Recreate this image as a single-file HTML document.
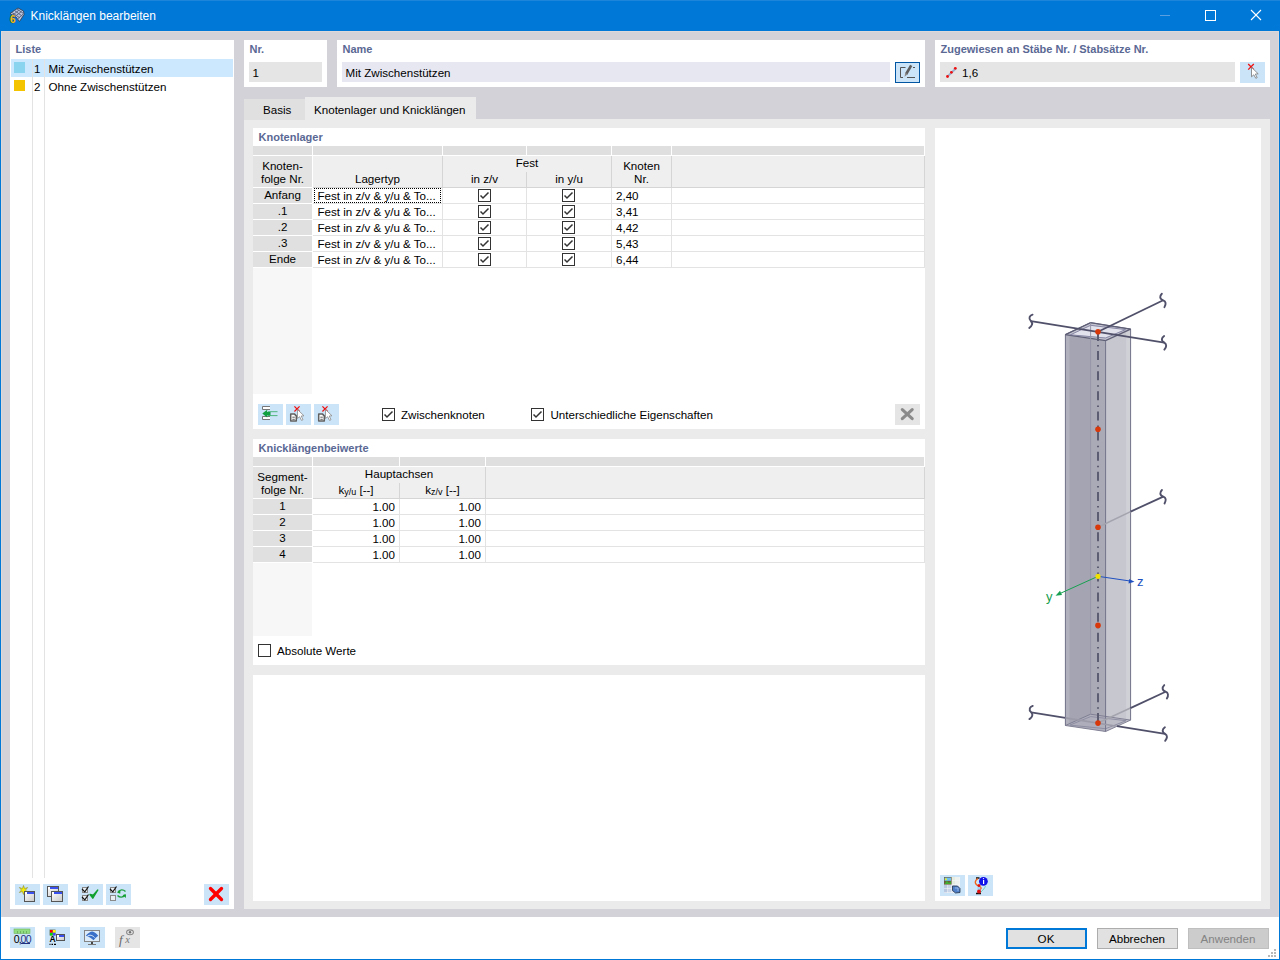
<!DOCTYPE html>
<html><head><meta charset="utf-8"><style>
html,body{margin:0;padding:0;width:1280px;height:960px;overflow:hidden;background:#fff}
svg{display:block;font-family:"Liberation Sans",sans-serif}
</style></head><body>
<svg width="1280" height="960" viewBox="0 0 1280 960">
<rect x="0" y="0" width="1280" height="960" fill="#0078d7" />
<rect x="1" y="31" width="1278" height="886" fill="#d3d2d8" />
<rect x="1" y="917" width="1278" height="42" fill="#ffffff" />
<rect x="0" y="0" width="1280" height="1" fill="#1e86da" />
<rect x="1" y="31" width="1278" height="1" fill="#ddd8da" />
<rect x="1" y="31" width="1" height="886" fill="#ddd8da" />
<rect x="1278" y="31" width="1" height="886" fill="#ddd8da" />
<text x="30.5" y="20" font-size="12" fill="#fff" text-anchor="start" >Knicklängen bearbeiten</text>
<rect x="1160" y="15" width="10" height="1" fill="#5a9fe0" />
<rect x="1205.5" y="10.5" width="10" height="10" fill="none" stroke="#fff" stroke-width="1"/>
<line x1="1251" y1="10" x2="1261" y2="20" stroke="#fff" stroke-width="1.1" />
<line x1="1261" y1="10" x2="1251" y2="20" stroke="#fff" stroke-width="1.1" />
<rect x="10" y="40" width="224" height="869" fill="#fff" />
<text x="15.5" y="53" font-size="11" font-weight="bold" fill="#5a6894" text-anchor="start" >Liste</text>
<rect x="11" y="59" width="222" height="18" fill="#cce8ff" />
<rect x="32" y="59" width="1" height="819" fill="#e3e3e3" />
<rect x="44" y="59" width="1" height="819" fill="#e3e3e3" />
<rect x="14" y="62" width="11" height="11" fill="#8ad4f0" />
<rect x="14" y="80" width="11" height="11" fill="#f5c400" />
<text x="40.5" y="73" font-size="11.6" fill="#000" text-anchor="end" >1</text>
<text x="48.5" y="73" font-size="11.6" fill="#000" text-anchor="start" >Mit Zwischenstützen</text>
<text x="40.5" y="91" font-size="11.6" fill="#000" text-anchor="end" >2</text>
<text x="48.5" y="91" font-size="11.6" fill="#000" text-anchor="start" >Ohne Zwischenstützen</text>
<rect x="244" y="40" width="83" height="47" fill="#fff" />
<text x="249.5" y="53" font-size="11" font-weight="bold" fill="#5a6894" text-anchor="start" >Nr.</text>
<rect x="249" y="62" width="73" height="20" fill="#e5e5e5" />
<text x="252.5" y="77" font-size="11.6" fill="#000" text-anchor="start" >1</text>
<rect x="337" y="40" width="588" height="47" fill="#fff" />
<text x="342.5" y="53" font-size="11" font-weight="bold" fill="#5a6894" text-anchor="start" >Name</text>
<rect x="342" y="62" width="548" height="20" fill="#e7e7f1" />
<text x="345.5" y="77" font-size="11.6" fill="#000" text-anchor="start" >Mit Zwischenstützen</text>
<rect x="895" y="62" width="25" height="21" fill="#0055a3" />
<rect x="896" y="63" width="23" height="19" fill="#cce4f7" />
<rect x="935" y="40" width="335" height="47" fill="#fff" />
<text x="940.5" y="53" font-size="11" font-weight="bold" fill="#5a6894" text-anchor="start" >Zugewiesen an Stäbe Nr. / Stabsätze Nr.</text>
<rect x="940" y="62" width="295" height="20" fill="#e5e5e5" />
<text x="962" y="77" font-size="11.6" fill="#000" text-anchor="start" >1,6</text>
<rect x="1240" y="62" width="25" height="21" fill="#cce4f7" />
<rect x="244" y="119" width="1026" height="790" fill="#ebebeb" />
<rect x="244" y="99" width="61" height="21" fill="#e0e0e0" />
<text x="263" y="114" font-size="11.6" fill="#000" text-anchor="start" >Basis</text>
<rect x="305" y="97" width="171" height="23" fill="#ebebeb" />
<text x="314" y="114" font-size="11.6" fill="#000" text-anchor="start" >Knotenlager und Knicklängen</text>
<rect x="253" y="128" width="672" height="301" fill="#fff" />
<rect x="253" y="439" width="672" height="226" fill="#fff" />
<rect x="253" y="675" width="672" height="226" fill="#fff" />
<rect x="935" y="128" width="326" height="773" fill="#fff" />
<rect x="1006" y="928" width="81" height="21" fill="#0078d7" />
<rect x="1008" y="930" width="77" height="17" fill="#e1e1e1" />
<text x="1046" y="943" font-size="11.6" fill="#000" text-anchor="middle" >OK</text>
<rect x="1097" y="928" width="81" height="21" fill="#adadad" />
<rect x="1098" y="929" width="79" height="19" fill="#e1e1e1" />
<text x="1137" y="943" font-size="11.6" fill="#000" text-anchor="middle" >Abbrechen</text>
<rect x="1188" y="928" width="81" height="21" fill="#bfbfbf" />
<rect x="1189" y="929" width="79" height="19" fill="#cccccc" />
<text x="1228" y="943" font-size="11.6" fill="#838383" text-anchor="middle" >Anwenden</text>
<text x="258.5" y="141" font-size="11" font-weight="bold" fill="#5a6894" text-anchor="start" >Knotenlager</text>
<rect x="253" y="146" width="671" height="9" fill="#dfdfdf" />
<rect x="312" y="146" width="1" height="9" fill="#fff" />
<rect x="442" y="146" width="1" height="9" fill="#fff" />
<rect x="526" y="146" width="1" height="9" fill="#fff" />
<rect x="611" y="146" width="1" height="9" fill="#fff" />
<rect x="671" y="146" width="1" height="9" fill="#fff" />
<rect x="253" y="156" width="59" height="31" fill="#e3e3e3" />
<rect x="313" y="156" width="611" height="31" fill="#efefef" />
<rect x="442" y="156" width="1" height="31" fill="#d5d5d5" />
<rect x="526" y="172" width="1" height="15" fill="#d5d5d5" />
<rect x="611" y="156" width="1" height="31" fill="#d5d5d5" />
<rect x="671" y="156" width="1" height="31" fill="#d5d5d5" />
<rect x="924" y="156" width="1" height="31" fill="#d5d5d5" />
<rect x="313" y="187" width="612" height="1" fill="#d5d5d5" />
<rect x="253" y="188" width="59" height="15" fill="#e0e0e0" />
<rect x="313" y="203" width="612" height="1" fill="#e3e3e3" />
<rect x="253" y="204" width="59" height="15" fill="#e0e0e0" />
<rect x="313" y="219" width="612" height="1" fill="#e3e3e3" />
<rect x="253" y="220" width="59" height="15" fill="#e0e0e0" />
<rect x="313" y="235" width="612" height="1" fill="#e3e3e3" />
<rect x="253" y="236" width="59" height="15" fill="#e0e0e0" />
<rect x="313" y="251" width="612" height="1" fill="#e3e3e3" />
<rect x="253" y="252" width="59" height="15" fill="#e0e0e0" />
<rect x="313" y="267" width="612" height="1" fill="#e3e3e3" />
<rect x="442" y="188" width="1" height="80" fill="#e3e3e3" />
<rect x="526" y="188" width="1" height="80" fill="#e3e3e3" />
<rect x="611" y="188" width="1" height="80" fill="#e3e3e3" />
<rect x="671" y="188" width="1" height="80" fill="#e3e3e3" />
<rect x="924" y="188" width="1" height="80" fill="#e3e3e3" />
<rect x="253" y="268" width="59" height="126" fill="#f7f7f7" />
<text x="282.5" y="170" font-size="11.6" fill="#000" text-anchor="middle" >Knoten-</text>
<text x="282.5" y="183" font-size="11.6" fill="#000" text-anchor="middle" >folge Nr.</text>
<text x="377.5" y="183" font-size="11.6" fill="#000" text-anchor="middle" >Lagertyp</text>
<text x="527" y="167" font-size="11.6" fill="#000" text-anchor="middle" >Fest</text>
<text x="484.5" y="183" font-size="11.6" fill="#000" text-anchor="middle" >in z/v</text>
<text x="569" y="183" font-size="11.6" fill="#000" text-anchor="middle" >in y/u</text>
<text x="641.5" y="170" font-size="11.6" fill="#000" text-anchor="middle" >Knoten</text>
<text x="641.5" y="183" font-size="11.6" fill="#000" text-anchor="middle" >Nr.</text>
<text x="282.5" y="199" font-size="11.6" fill="#000" text-anchor="middle" >Anfang</text>
<text x="317.4" y="200" font-size="11.6" fill="#000" text-anchor="start" >Fest in z/v &amp; y/u &amp; To...</text>
<rect x="478.5" y="189.5" width="12" height="12" fill="#fff" stroke="#333" stroke-width="1"/>
<polyline points="480.5,195.5 483,198 488.5,192.5" fill="none" stroke="#333" stroke-width="1.45"/>
<rect x="562.5" y="189.5" width="12" height="12" fill="#fff" stroke="#333" stroke-width="1"/>
<polyline points="564.5,195.5 567,198 572.5,192.5" fill="none" stroke="#333" stroke-width="1.45"/>
<text x="616" y="200" font-size="11.6" fill="#000" text-anchor="start" >2,40</text>
<text x="282.5" y="215" font-size="11.6" fill="#000" text-anchor="middle" >.1</text>
<text x="317.4" y="216" font-size="11.6" fill="#000" text-anchor="start" >Fest in z/v &amp; y/u &amp; To...</text>
<rect x="478.5" y="205.5" width="12" height="12" fill="#fff" stroke="#333" stroke-width="1"/>
<polyline points="480.5,211.5 483,214 488.5,208.5" fill="none" stroke="#333" stroke-width="1.45"/>
<rect x="562.5" y="205.5" width="12" height="12" fill="#fff" stroke="#333" stroke-width="1"/>
<polyline points="564.5,211.5 567,214 572.5,208.5" fill="none" stroke="#333" stroke-width="1.45"/>
<text x="616" y="216" font-size="11.6" fill="#000" text-anchor="start" >3,41</text>
<text x="282.5" y="231" font-size="11.6" fill="#000" text-anchor="middle" >.2</text>
<text x="317.4" y="232" font-size="11.6" fill="#000" text-anchor="start" >Fest in z/v &amp; y/u &amp; To...</text>
<rect x="478.5" y="221.5" width="12" height="12" fill="#fff" stroke="#333" stroke-width="1"/>
<polyline points="480.5,227.5 483,230 488.5,224.5" fill="none" stroke="#333" stroke-width="1.45"/>
<rect x="562.5" y="221.5" width="12" height="12" fill="#fff" stroke="#333" stroke-width="1"/>
<polyline points="564.5,227.5 567,230 572.5,224.5" fill="none" stroke="#333" stroke-width="1.45"/>
<text x="616" y="232" font-size="11.6" fill="#000" text-anchor="start" >4,42</text>
<text x="282.5" y="247" font-size="11.6" fill="#000" text-anchor="middle" >.3</text>
<text x="317.4" y="248" font-size="11.6" fill="#000" text-anchor="start" >Fest in z/v &amp; y/u &amp; To...</text>
<rect x="478.5" y="237.5" width="12" height="12" fill="#fff" stroke="#333" stroke-width="1"/>
<polyline points="480.5,243.5 483,246 488.5,240.5" fill="none" stroke="#333" stroke-width="1.45"/>
<rect x="562.5" y="237.5" width="12" height="12" fill="#fff" stroke="#333" stroke-width="1"/>
<polyline points="564.5,243.5 567,246 572.5,240.5" fill="none" stroke="#333" stroke-width="1.45"/>
<text x="616" y="248" font-size="11.6" fill="#000" text-anchor="start" >5,43</text>
<text x="282.5" y="263" font-size="11.6" fill="#000" text-anchor="middle" >Ende</text>
<text x="317.4" y="264" font-size="11.6" fill="#000" text-anchor="start" >Fest in z/v &amp; y/u &amp; To...</text>
<rect x="478.5" y="253.5" width="12" height="12" fill="#fff" stroke="#333" stroke-width="1"/>
<polyline points="480.5,259.5 483,262 488.5,256.5" fill="none" stroke="#333" stroke-width="1.45"/>
<rect x="562.5" y="253.5" width="12" height="12" fill="#fff" stroke="#333" stroke-width="1"/>
<polyline points="564.5,259.5 567,262 572.5,256.5" fill="none" stroke="#333" stroke-width="1.45"/>
<text x="616" y="264" font-size="11.6" fill="#000" text-anchor="start" >6,44</text>
<defs><pattern id="dots" width="2" height="2" patternUnits="userSpaceOnUse"><rect x="0" y="0" width="1" height="1" fill="#000"/><rect x="1" y="1" width="1" height="1" fill="#000"/></pattern></defs>
<defs><pattern id="dots2" width="2" height="2" patternUnits="userSpaceOnUse"><rect x="0" y="0" width="1" height="1" fill="#000"/></pattern></defs>
<rect x="314" y="188" width="128" height="1" fill="url(#dots2)" />
<rect x="314" y="202" width="128" height="1" fill="url(#dots2)" />
<rect x="314" y="188" width="1" height="15" fill="url(#dots2)" />
<rect x="440" y="188" width="1" height="15" fill="url(#dots2)" />
<rect x="258" y="404" width="25" height="21" fill="#cce4f7" />
<rect x="286" y="404" width="25" height="21" fill="#cce4f7" />
<rect x="314" y="404" width="25" height="21" fill="#cce4f7" />
<rect x="382.5" y="408.5" width="12" height="12" fill="#fff" stroke="#333" stroke-width="1"/>
<polyline points="384.5,414.5 387,417 392.5,411.5" fill="none" stroke="#333" stroke-width="1.45"/>
<text x="401" y="419" font-size="11.6" fill="#000" text-anchor="start" >Zwischenknoten</text>
<rect x="531.5" y="408.5" width="12" height="12" fill="#fff" stroke="#333" stroke-width="1"/>
<polyline points="533.5,414.5 536,417 541.5,411.5" fill="none" stroke="#333" stroke-width="1.45"/>
<text x="550.5" y="419" font-size="11.6" fill="#000" text-anchor="start" >Unterschiedliche Eigenschaften</text>
<rect x="895" y="404" width="25" height="21" fill="#e5e5e5" />
<line x1="902.3" y1="409.6" x2="912.2" y2="418.6" stroke="#8a8a8a" stroke-width="3.1" stroke-linecap="round"/>
<line x1="912.2" y1="409.6" x2="902.3" y2="418.6" stroke="#8a8a8a" stroke-width="3.1" stroke-linecap="round"/>
<text x="258.5" y="452" font-size="11" font-weight="bold" fill="#5a6894" text-anchor="start" >Knicklängenbeiwerte</text>
<rect x="253" y="457" width="671" height="9" fill="#dfdfdf" />
<rect x="312" y="457" width="1" height="9" fill="#fff" />
<rect x="399" y="457" width="1" height="9" fill="#fff" />
<rect x="485" y="457" width="1" height="9" fill="#fff" />
<rect x="253" y="467" width="59" height="31" fill="#e3e3e3" />
<rect x="313" y="467" width="611" height="31" fill="#efefef" />
<rect x="399" y="483" width="1" height="15" fill="#d5d5d5" />
<rect x="485" y="467" width="1" height="31" fill="#d5d5d5" />
<rect x="924" y="467" width="1" height="31" fill="#d5d5d5" />
<rect x="313" y="498" width="612" height="1" fill="#d5d5d5" />
<rect x="253" y="499" width="59" height="15" fill="#e0e0e0" />
<rect x="313" y="514" width="612" height="1" fill="#e3e3e3" />
<rect x="253" y="515" width="59" height="15" fill="#e0e0e0" />
<rect x="313" y="530" width="612" height="1" fill="#e3e3e3" />
<rect x="253" y="531" width="59" height="15" fill="#e0e0e0" />
<rect x="313" y="546" width="612" height="1" fill="#e3e3e3" />
<rect x="253" y="547" width="59" height="15" fill="#e0e0e0" />
<rect x="313" y="562" width="612" height="1" fill="#e3e3e3" />
<rect x="399" y="499" width="1" height="64" fill="#e3e3e3" />
<rect x="485" y="499" width="1" height="64" fill="#e3e3e3" />
<rect x="924" y="499" width="1" height="64" fill="#e3e3e3" />
<rect x="253" y="563" width="59" height="73" fill="#f7f7f7" />
<text x="282.5" y="481" font-size="11.6" fill="#000" text-anchor="middle" >Segment-</text>
<text x="282.5" y="494" font-size="11.6" fill="#000" text-anchor="middle" >folge Nr.</text>
<text x="399" y="478" font-size="11.6" fill="#000" text-anchor="middle" >Hauptachsen</text>
<text x="356" y="494" font-size="11.6" fill="#000" text-anchor="middle" >k<tspan font-size="9" dy="1">y/u</tspan><tspan dy="-1"> [--]</tspan></text>
<text x="442.5" y="494" font-size="11.6" fill="#000" text-anchor="middle" >k<tspan font-size="9" dy="1">z/v</tspan><tspan dy="-1"> [--]</tspan></text>
<text x="282.5" y="510" font-size="11.6" fill="#000" text-anchor="middle" >1</text>
<text x="395" y="511" font-size="11.6" fill="#000" text-anchor="end" >1.00</text>
<text x="481" y="511" font-size="11.6" fill="#000" text-anchor="end" >1.00</text>
<text x="282.5" y="526" font-size="11.6" fill="#000" text-anchor="middle" >2</text>
<text x="395" y="527" font-size="11.6" fill="#000" text-anchor="end" >1.00</text>
<text x="481" y="527" font-size="11.6" fill="#000" text-anchor="end" >1.00</text>
<text x="282.5" y="542" font-size="11.6" fill="#000" text-anchor="middle" >3</text>
<text x="395" y="543" font-size="11.6" fill="#000" text-anchor="end" >1.00</text>
<text x="481" y="543" font-size="11.6" fill="#000" text-anchor="end" >1.00</text>
<text x="282.5" y="558" font-size="11.6" fill="#000" text-anchor="middle" >4</text>
<text x="395" y="559" font-size="11.6" fill="#000" text-anchor="end" >1.00</text>
<text x="481" y="559" font-size="11.6" fill="#000" text-anchor="end" >1.00</text>
<rect x="258.5" y="644.5" width="12" height="12" fill="#fff" stroke="#333" stroke-width="1"/>
<text x="277" y="655" font-size="11.6" fill="#000" text-anchor="start" >Absolute Werte</text>
<rect x="15" y="884" width="25" height="21" fill="#cce4f7" />
<rect x="43" y="884" width="25" height="21" fill="#cce4f7" />
<rect x="78" y="884" width="25" height="21" fill="#cce4f7" />
<rect x="106" y="884" width="25" height="21" fill="#cce4f7" />
<rect x="204" y="884" width="25" height="21" fill="#cce4f7" />
<line x1="210.5" y1="888.5" x2="221.5" y2="899.5" stroke="#f00" stroke-width="3.3" stroke-linecap="round"/>
<line x1="221.5" y1="888.5" x2="210.5" y2="899.5" stroke="#f00" stroke-width="3.3" stroke-linecap="round"/>
<rect x="10" y="927" width="25" height="21" fill="#cce4f7" />
<rect x="45" y="927" width="25" height="21" fill="#cce4f7" />
<rect x="80" y="927" width="25" height="21" fill="#cce4f7" />
<rect x="115" y="927" width="25" height="21" fill="#e5e5e5" />
<rect x="940" y="875" width="25" height="21" fill="#cce4f7" />
<rect x="968" y="875" width="25" height="21" fill="#cce4f7" />
<polygon points="1065.4,334.6 1105.6,340.6 1105.6,731.5 1065.4,725.5" fill="#a4a4b2"/>
<polygon points="1065.4,334.6 1069.6000000000001,335.20000000000005 1069.6000000000001,726.1 1065.4,725.5" fill="#b1b1bd"/>
<polygon points="1090.6,322.7 1105.6,340.6 1105.6,731.5 1090.6,717.2" fill="#aaaab7"/>
<polygon points="1105.6,340.6 1130.6,329.1 1130.6,720.1 1105.6,731.5" fill="#c7c7d0"/>
<polygon points="1126.1,330.8 1130.6,329.1 1130.6,720.1 1126.1,721.8000000000001" fill="#d0d0d7"/>
<polygon points="1065.4,334.6 1090.6,322.7 1130.6,329.1 1105.6,340.6" fill="#c4c4d0"/>
<polygon points="1071.4,334.6 1090.6,325.7 1124.6,329.40000000000003 1105.6,337.6" fill="#e2e2ec"/>
<polygon points="1065.4,725.5 1105.6,731.5 1130.6,720.1 1090.6,714.2" fill="#b4b4c2" opacity="0.6"/>
<polygon points="1065.4,725.5 1105.6,731.5 1130.6,720.1 1090.6,714.2" fill="none" stroke="#7a7a90" stroke-width="0.9"/>
<polygon points="1069.9,725.1 1105.6,728.7 1126.1,720.7 1090.6,716.6" fill="none" stroke="#8a8aa0" stroke-width="0.9"/>
<polyline points="1065.4,725.5 1065.4,334.6 1090.6,322.7 1130.6,329.1 1130.6,720.1" fill="none" stroke="#72728a" stroke-width="1"/>
<polyline points="1065.4,334.6 1105.6,340.6 1130.6,329.1" fill="none" stroke="#5e5e76" stroke-width="1.4"/>
<polyline points="1065.4,334.6 1090.6,322.7 1130.6,329.1" fill="none" stroke="#5e5e76" stroke-width="1.3"/>
<polygon points="1070.4,334.8 1090.6,325.3 1125.6,329.6 1105.6,338.0" fill="none" stroke="#8080a0" stroke-width="0.9"/>
<line x1="1105.6" y1="340.6" x2="1105.6" y2="731.5" stroke="#72728a" stroke-width="1"/>
<line x1="1090.6" y1="322.7" x2="1090.6" y2="714.2" stroke="#9696a8" stroke-width="1"/>
<line x1="1098" y1="332" x2="1098" y2="723" stroke="#5c5c72" stroke-width="2" stroke-dasharray="9 5.12 1.5 4.5" stroke-dashoffset="1"/>
<line x1="1098" y1="332" x2="1098" y2="341" stroke="#5c5c72" stroke-width="2"/>
<line x1="1098" y1="713" x2="1098" y2="723" stroke="#5c5c72" stroke-width="2"/>
<line x1="1031" y1="321.2" x2="1164.3" y2="342.7" stroke="#50506a" stroke-width="1.8" />
<path transform="translate(1031,321.2) rotate(3)" d="M1.2,-6.6 C-1.5,-5.5 -3.2,-2.8 0,0 C2.2,2 1.5,4.5 -1.4,6.8" fill="none" stroke="#50506a" stroke-width="1.9" stroke-linecap="round"/>
<path transform="translate(1164.3,342.7) rotate(-12)" d="M1.2,-6.6 C-1.5,-5.5 -3.2,-2.8 0,0 C2.2,2 1.5,4.5 -1.4,6.8" fill="none" stroke="#50506a" stroke-width="1.9" stroke-linecap="round"/>
<line x1="1098" y1="331.7" x2="1163.2" y2="300.3" stroke="#50506a" stroke-width="1.8" />
<path transform="translate(1163.2,300.3) rotate(-22)" d="M1.2,-6.6 C-1.5,-5.5 -3.2,-2.8 0,0 C2.2,2 1.5,4.5 -1.4,6.8" fill="none" stroke="#50506a" stroke-width="1.9" stroke-linecap="round"/>
<line x1="1098" y1="527.3" x2="1130.6" y2="511.6" stroke="#a4a4ae" stroke-width="1.6" />
<line x1="1130.6" y1="511.6" x2="1163.3" y2="496.6" stroke="#50506a" stroke-width="1.8" />
<path transform="translate(1163.3,496.6) rotate(-22)" d="M1.2,-6.6 C-1.5,-5.5 -3.2,-2.8 0,0 C2.2,2 1.5,4.5 -1.4,6.8" fill="none" stroke="#50506a" stroke-width="1.9" stroke-linecap="round"/>
<line x1="1031.2" y1="712.4" x2="1065.4" y2="717.9" stroke="#50506a" stroke-width="1.8" />
<line x1="1065.4" y1="717.9" x2="1116.9" y2="726.2" stroke="#9a9aa8" stroke-width="1.6" />
<line x1="1116.9" y1="726.2" x2="1165.1" y2="733.9" stroke="#50506a" stroke-width="1.8" />
<path transform="translate(1031.2,712.4) rotate(3)" d="M1.2,-6.6 C-1.5,-5.5 -3.2,-2.8 0,0 C2.2,2 1.5,4.5 -1.4,6.8" fill="none" stroke="#50506a" stroke-width="1.9" stroke-linecap="round"/>
<path transform="translate(1165.1,733.9) rotate(-12)" d="M1.2,-6.6 C-1.5,-5.5 -3.2,-2.8 0,0 C2.2,2 1.5,4.5 -1.4,6.8" fill="none" stroke="#50506a" stroke-width="1.9" stroke-linecap="round"/>
<line x1="1098" y1="723" x2="1130.4" y2="708.1" stroke="#a4a4ae" stroke-width="1.6" />
<line x1="1130.4" y1="708.1" x2="1165.6" y2="691.7" stroke="#50506a" stroke-width="1.8" />
<path transform="translate(1165.6,691.7) rotate(-22)" d="M1.2,-6.6 C-1.5,-5.5 -3.2,-2.8 0,0 C2.2,2 1.5,4.5 -1.4,6.8" fill="none" stroke="#50506a" stroke-width="1.9" stroke-linecap="round"/>
<circle cx="1098" cy="331.7" r="2.8" fill="#d8380a"/>
<circle cx="1098" cy="429.3" r="2.8" fill="#d8380a"/>
<circle cx="1098" cy="527.3" r="2.8" fill="#d8380a"/>
<circle cx="1098" cy="625.4" r="2.8" fill="#d8380a"/>
<circle cx="1098" cy="723.1" r="2.8" fill="#d8380a"/>
<line x1="1098" y1="576.3" x2="1130" y2="581" stroke="#2050c0" stroke-width="1" />
<polygon points="1134.5,581.7 1128.5,583.6 1129.2,579" fill="#2050c0"/>
<text x="1137" y="586" font-size="13" fill="#2050c0" text-anchor="start" >z</text>
<line x1="1098" y1="576.3" x2="1060" y2="593.5" stroke="#18a050" stroke-width="1" />
<polygon points="1055.5,595.8 1060,590.8 1062,595" fill="#18a050"/>
<text x="1046" y="601" font-size="13" fill="#18a050" text-anchor="start" >y</text>
<circle cx="1098" cy="576.3" r="2.6" fill="#f0e000"/>
<defs><linearGradient id="wg" x1="0" y1="0" x2="1" y2="1"><stop offset="0" stop-color="#ffffff"/><stop offset="1" stop-color="#c8c8c8"/></linearGradient></defs>
<polygon points="10,13.5 18,8 23.5,11 24,14.5 19.5,21.5 16,17" fill="#b8c4e0" stroke="#303848" stroke-width="0.8"/>
<path d="M12,12.5 L20,18 M14.5,10.5 L22,16 M17,9 L23.5,13.5 M13,15 L19,10 M15,16.5 L21.5,11.5 M17.5,19 L23.5,13.8" stroke="#606880" stroke-width="1" fill="none"/>
<text x="12.8" y="22.5" font-size="10" font-weight="bold" fill="#f0c020" stroke="#3a3000" stroke-width="0.6" text-anchor="middle" style="paint-order:stroke">6</text>
<polygon points="23.5,885.5 24.6,888.6 27.6,887.5 25.6,890 27.6,892.5 24.6,891.4 23.5,894.5 22.4,891.4 19.4,892.5 21.4,890 19.4,887.5 22.4,888.6" fill="#f8f000" stroke="#8a8a30" stroke-width="0.6"/>
<rect x="24.5" y="891.5" width="10" height="10" fill="url(#wg)" stroke="#555" stroke-width="1"/>
<rect x="25" y="892" width="9" height="2" fill="#3a50ee"/>
<rect x="25" y="892" width="2" height="2" fill="#fff"/>
<rect x="47.5" y="886.5" width="11" height="10" fill="url(#wg)" stroke="#555" stroke-width="1"/>
<rect x="48" y="887" width="10" height="2" fill="#3a50ee"/>
<rect x="48" y="887" width="2" height="2" fill="#fff"/>
<rect x="51.5" y="891.5" width="11" height="10" fill="url(#wg)" stroke="#555" stroke-width="1"/>
<rect x="52" y="892" width="10" height="2" fill="#3a50ee"/>
<rect x="52" y="892" width="2" height="2" fill="#fff"/>
<rect x="82.5" y="887.5" width="5" height="5" fill="#e8eef4" stroke="#8a8a8a" stroke-width="1"/>
<polyline points="82,889 84.8,891.8 88.5,886.5" fill="none" stroke="#111" stroke-width="1.2"/>
<rect x="82.5" y="895.5" width="5" height="5" fill="#e8eef4" stroke="#8a8a8a" stroke-width="1"/>
<polyline points="82,897 84.8,899.8 88.5,894.5" fill="none" stroke="#111" stroke-width="1.2"/>
<rect x="110.5" y="887.5" width="5" height="5" fill="#e8eef4" stroke="#8a8a8a" stroke-width="1"/>
<polyline points="110,889 112.8,891.8 116.5,886.5" fill="none" stroke="#111" stroke-width="1.2"/>
<rect x="110.5" y="895.5" width="5" height="5" fill="#e8eef4" stroke="#8a8a8a" stroke-width="1"/>
<path d="M90,894.5 L92.8,898.2 L97.8,890 L93.2,895.2 Z" fill="#10a030" stroke="#10a030" stroke-width="1.4" stroke-linejoin="round"/>
<path d="M125.5,891.5 C123,889 120,889.5 118,891.8" fill="none" stroke="#20a040" stroke-width="1.4"/><polygon points="117,892.5 120.5,890 120.2,893.8" fill="#10a030"/>
<path d="M117.5,895.5 C120,898 123,897.5 125,895" fill="none" stroke="#20a040" stroke-width="1.4"/><polygon points="126,894.2 122.6,895 125.8,898" fill="#10a030"/>
<path d="M903.5,87.5" />
<polyline points="905.5,67.5 900.5,67.5 900.5,77.5 903,77.5" fill="none" stroke="#555" stroke-width="1"/>
<line x1="907" y1="77.5" x2="915" y2="77.5" stroke="#555" stroke-width="1"/>
<line x1="913" y1="67.5" x2="915" y2="67.5" stroke="#555" stroke-width="1"/>
<line x1="906.2" y1="74" x2="911.2" y2="65.3" stroke="#5e5e5e" stroke-width="2.6"/><polygon points="905.2,72.6 907.6,74.2 904.6,76.8" fill="#8a8a8a"/>
<line x1="1248.2" y1="64.0" x2="1253.8" y2="69.6" stroke="#f01010" stroke-width="1.3"/><line x1="1253.8" y1="64.0" x2="1248.2" y2="69.6" stroke="#f01010" stroke-width="1.3"/>
<path d="M1251.5,67.3 L1251.5,76.8 L1253.8,74.8 L1255.8,78.3 L1257.2,77.6 L1255.3,74.1 L1258.2,73.8 Z" fill="#fff" stroke="#777" stroke-width="0.8"/>
<line x1="947.5" y1="76.5" x2="955.8" y2="68.5" stroke="#9ab0d0" stroke-width="2"/>
<circle cx="947.5" cy="76.5" r="1.4" fill="#ee1111"/>
<circle cx="951.4" cy="72.3" r="1.4" fill="#ee1111"/>
<circle cx="955.3" cy="68.3" r="1.4" fill="#ee1111"/>
<rect x="263" y="407" width="7" height="3" fill="#fff" />
<rect x="263" y="417" width="7" height="3" fill="#fff" />
<path d="M270,406.5 H262.5 V409.5 H270 M270,416.5 H262.5 V419.5 H270" fill="none" stroke="#777" stroke-width="1"/>
<line x1="268" y1="411.7" x2="277.5" y2="411.7" stroke="#40b070" stroke-width="0.9"/><line x1="268" y1="415.6" x2="277.5" y2="415.6" stroke="#40b070" stroke-width="0.9"/>
<polygon points="262.3,413.6 267.2,409.8 267.2,417.4" fill="#10a040"/><rect x="266.5" y="412" width="4" height="3.4" fill="#10a040"/>
<path d="M290.7,413.9 L294.3,413.9 L296.3,415.9 L296.3,421.1 L290.7,421.1 Z" fill="#fff" stroke="#606060" stroke-width="1.5" stroke-linejoin="round"/>
<line x1="292.3" y1="417.2" x2="294.8" y2="417.2" stroke="#606060" stroke-width="1"/><line x1="292.3" y1="419.3" x2="294.8" y2="419.3" stroke="#606060" stroke-width="1"/>
<line x1="294.4" y1="406.3" x2="299.6" y2="411.5" stroke="#f01010" stroke-width="1.2"/><line x1="299.6" y1="406.3" x2="294.4" y2="411.5" stroke="#f01010" stroke-width="1.2"/>
<path d="M297.5,409.5 L297.5,418.5 L299.6,416.7 L301.5,420.4 L303,419.7 L301.2,416 L304,415.8 Z" fill="#fff" stroke="#888" stroke-width="0.8"/>
<path d="M318.7,413.9 L322.3,413.9 L324.3,415.9 L324.3,421.1 L318.7,421.1 Z" fill="#fff" stroke="#606060" stroke-width="1.5" stroke-linejoin="round"/>
<line x1="320.3" y1="417.2" x2="322.8" y2="417.2" stroke="#606060" stroke-width="1"/><line x1="320.3" y1="419.3" x2="322.8" y2="419.3" stroke="#606060" stroke-width="1"/>
<line x1="322.4" y1="406.3" x2="327.6" y2="411.5" stroke="#f01010" stroke-width="1.2"/><line x1="327.6" y1="406.3" x2="322.4" y2="411.5" stroke="#f01010" stroke-width="1.2"/>
<path d="M325.5,409.5 L325.5,418.5 L327.6,416.7 L329.5,420.4 L331,419.7 L329.2,416 L332,415.8 Z" fill="#fff" stroke="#888" stroke-width="0.8"/>
<rect x="944" y="877" width="16" height="16" fill="#f4f6f8"/>
<rect x="944" y="877" width="3.4" height="3.4" fill="#c8d8c0"/>
<rect x="944" y="881" width="3.4" height="3.4" fill="#c8d8c0"/>
<rect x="944" y="885" width="3.4" height="3.4" fill="#b8c8e0"/>
<rect x="944" y="889" width="3.4" height="3.4" fill="#b8c8e0"/>
<rect x="948" y="877" width="3.4" height="3.4" fill="#d8e4d4"/>
<rect x="948" y="881" width="3.4" height="3.4" fill="#d8e4d4"/>
<rect x="948" y="885" width="3.4" height="3.4" fill="#c8d4e8"/>
<rect x="948" y="889" width="3.4" height="3.4" fill="#c8d4e8"/>
<rect x="952" y="877" width="3.4" height="3.4" fill="#e4ece0"/>
<rect x="952" y="881" width="3.4" height="3.4" fill="#e4ece0"/>
<rect x="952" y="885" width="3.4" height="3.4" fill="#d8e0f0"/>
<rect x="952" y="889" width="3.4" height="3.4" fill="#d8e0f0"/>
<rect x="956" y="877" width="3.4" height="3.4" fill="#eef2ee"/>
<rect x="956" y="881" width="3.4" height="3.4" fill="#eef2ee"/>
<rect x="956" y="885" width="3.4" height="3.4" fill="#e8eef8"/>
<rect x="956" y="889" width="3.4" height="3.4" fill="#e8eef8"/>
<rect x="944" y="877" width="7.6" height="7.6" fill="#6a5a40"/><rect x="944.6" y="877.6" width="6.4" height="3.2" fill="#70c0f0"/><circle cx="946" cy="879.3" r="1" fill="#f0f020"/><path d="M944.6,884 L946.8,880.8 L949,883 L951,881 L951,884 Z" fill="#40b030"/>
<path d="M952.5,886 L957.5,886 L960,888.5 L960,892.5 L955.5,893 L952.5,890.5 Z" fill="#5080c8" stroke="#203048" stroke-width="0.8"/><path d="M955,888 L958,888 L958,891" fill="none" stroke="#a8c8f0" stroke-width="0.8"/>
<path d="M976,878 L979.5,878 M976,893.5 L981,893.5" stroke="#111" stroke-width="1.4"/>
<path d="M978,878.5 C974,881 974.5,884.5 979,886 C982,887.5 982,889 978.5,890" fill="none" stroke="#f06018" stroke-width="1.3"/>
<rect x="977.5" y="886.5" width="2.5" height="4" fill="#a0d0f0"/><circle cx="979" cy="891.5" r="2" fill="#e01010"/><circle cx="979" cy="885.5" r="1.5" fill="#e01010"/>
<path d="M981,892 C983,890 984.5,888.5 985.5,886" fill="none" stroke="#50c8b0" stroke-width="0.8"/>
<circle cx="983.4" cy="881.3" r="4.4" fill="#1010e8"/><rect x="983" y="880" width="1.2" height="4" fill="#fff"/><circle cx="983.5" cy="878.6" r="0.7" fill="#fff"/>
<rect x="14" y="929" width="16" height="4.5" fill="#90dc80" stroke="#70b860" stroke-width="0.6"/>
<path d="M17.5,931 v2.5 M20.5,931 v2.5 M23.5,931 v2.5 M26.5,931 v2.5" stroke="#60a050" stroke-width="0.7"/>
<text x="13.8" y="942.6" font-size="10.5" fill="#000" letter-spacing="-0.8">0,</text><text x="20.6" y="942.6" font-size="10.5" fill="#203080" letter-spacing="-0.6">00</text>
<rect x="21" y="943" width="9" height="1" fill="#203080"/>
<rect x="49.5" y="929.5" width="6" height="6" fill="#708070"/><rect x="50" y="930" width="2.5" height="2.5" fill="#f00"/><rect x="53" y="930" width="2.5" height="2.5" fill="#ff0"/><rect x="50" y="933" width="2.5" height="2.5" fill="#0d0"/><rect x="53" y="933" width="2.5" height="2.5" fill="#44f"/>
<text x="52.5" y="942.2" font-size="8.5" font-weight="bold" text-anchor="middle" fill="#000">A</text><path d="M49.5,944.3 h1 M51.5,944.3 h1.5 M54,944.3 h2" stroke="#000" stroke-width="1.2"/>
<rect x="56.5" y="934.5" width="8" height="6" fill="url(#wg)" stroke="#555" stroke-width="1"/>
<rect x="57" y="935" width="7" height="2" fill="#3a50ee"/>
<rect x="57" y="935" width="2" height="2" fill="#fff"/>
<rect x="84.5" y="930.5" width="15" height="11" fill="#dcecfa" stroke="#858585" stroke-width="1"/><rect x="91" y="942" width="2" height="2" fill="#444"/><rect x="88" y="944" width="8" height="1" fill="#777"/>
<path d="M85.8,935.8 C88,933 91,931.2 92.5,931.5 C95,932.2 97,934 98.2,935.8 C96.5,937 95,938.5 93.5,940.3 C92,938.5 89,936.8 85.8,935.8 Z" fill="#3a70c8"/><path d="M87.5,936 C89.5,934.8 92,934.8 94.5,937.5" stroke="#e8f4ff" stroke-width="1" fill="none"/>
<text x="119" y="943.5" font-size="13" font-style="italic" font-family="Liberation Serif" fill="#686868">f</text><text x="125.3" y="943" font-size="10.5" font-style="italic" font-family="Liberation Serif" fill="#777">x</text>
<ellipse cx="130" cy="932.3" rx="3.4" ry="2.4" fill="none" stroke="#8a8a8a" stroke-width="1.1"/><circle cx="130" cy="932.3" r="1.2" fill="#707070"/>
<rect x="1274" y="949" width="2" height="2" fill="#b8b8b8" />
<rect x="1271" y="952" width="2" height="2" fill="#b8b8b8" />
<rect x="1274" y="952" width="2" height="2" fill="#b8b8b8" />
<rect x="1268" y="955" width="2" height="2" fill="#b8b8b8" />
<rect x="1271" y="955" width="2" height="2" fill="#b8b8b8" />
<rect x="1274" y="955" width="2" height="2" fill="#b8b8b8" />
</svg></body></html>
